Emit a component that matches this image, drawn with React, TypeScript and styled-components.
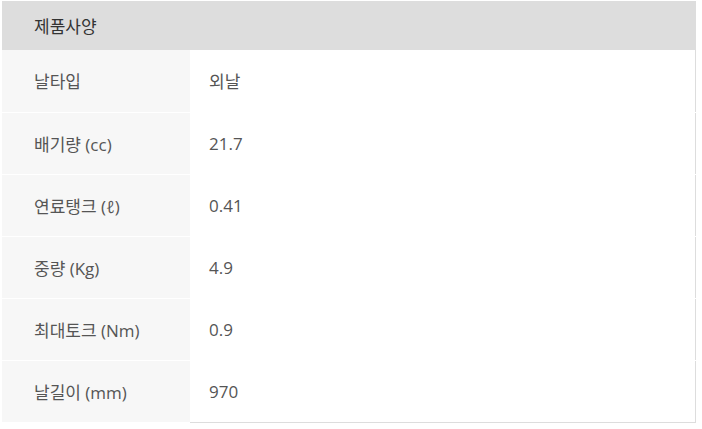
import React from "react";
import styled, { createGlobalStyle } from "styled-components";

interface Spec {
    label: string;
    value: string;
}

const specs: Spec[] = [
    { label: "날타입", value: "외날" },
    { label: "배기량 (cc)", value: "21.7" },
    { label: "연료탱크 (ℓ)", value: "0.41" },
    { label: "중량 (Kg)", value: "4.9" },
    { label: "최대토크 (Nm)", value: "0.9" },
    { label: "날길이 (mm)", value: "970" },
];

function App() {
    return (
        <>
            <GlobalStyle />
            <Wrapper>
                <SpecTable>
                    <colgroup>
                        <LabelCol />
                        <col />
                    </colgroup>
                    <thead>
                        <tr>
                            <HeaderCell colSpan={2}>제품사양</HeaderCell>
                        </tr>
                    </thead>
                    <tbody>
                        {specs.map((spec, i) => (
                            <SpecRow key={spec.label}>
                                <LabelCell last={i === specs.length - 1}>
                                    {spec.label}
                                </LabelCell>
                                <ValueCell last={i === specs.length - 1}>
                                    {spec.value}
                                </ValueCell>
                            </SpecRow>
                        ))}
                    </tbody>
                </SpecTable>
            </Wrapper>
        </>
    );
}

const GlobalStyle = createGlobalStyle`
    body {
        margin: 0;
        background: #ffffff;
        font-family: "Open Sans", "Noto Sans CJK KR", sans-serif;
    }
`;

const Wrapper = styled.div`
    padding: 1px 0 0 2px;
`;

const SpecTable = styled.table`
    width: 694px;
    border-collapse: collapse;
    table-layout: fixed;
`;

const LabelCol = styled.col`
    width: 188px;
`;

const HeaderCell = styled.th`
    height: 49px;
    padding: 0 0 0 32px;
    background: #dddddd;
    color: #333333;
    font-size: 17px;
    font-weight: 400;
    text-align: left;
    vertical-align: middle;
`;

const SpecRow = styled.tr`
    height: 62px;
`;

const LabelCell = styled.td<{ last: boolean }>`
    padding: 0 0 0 32px;
    background: #f7f7f7;
    border-bottom: ${(p) => (p.last ? "0" : "1px solid #ffffff")};
    color: #555555;
    font-size: 17px;
    vertical-align: middle;
`;

const ValueCell = styled.td<{ last: boolean }>`
    padding: 0 0 0 19px;
    background: #ffffff;
    border-right: 1px solid #dddddd;
    border-bottom: ${(p) => (p.last ? "1px solid #dddddd" : "1px solid #ffffff")};
    color: #555555;
    font-size: 17px;
    vertical-align: middle;
`;

export default App;
